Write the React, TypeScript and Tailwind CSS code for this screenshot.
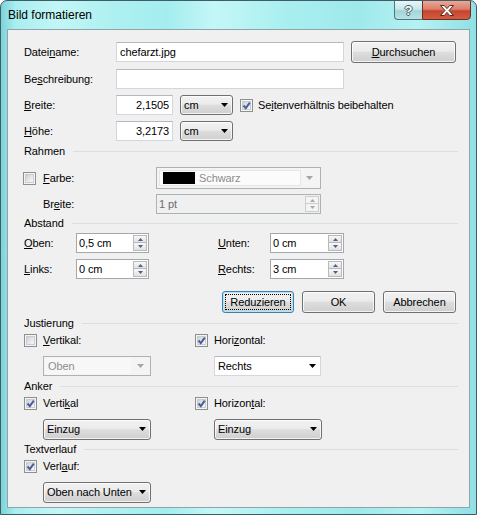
import React from "react";

const FONT = "font-['Liberation_Sans',Arial,sans-serif]";

function Arrow({ color = "#000" }: { color?: string }) {
  return (
    <svg width="7" height="4" viewBox="0 0 7 4" className="shrink-0">
      <path d="M0 0H7L3.5 4Z" fill={color} />
    </svg>
  );
}

function Check({ checked, className = "" }: { checked?: boolean; className?: string }) {
  return (
    <span
      className={`relative flex h-[13px] w-[13px] shrink-0 items-center justify-center border border-[#8e8f8f] bg-[#f4f4f4] ${className}`}
    >
      <span className="h-[9px] w-[9px] border border-[#c9ccd1] bg-[linear-gradient(135deg,#cbcfd5_0%,#e4e6e9_50%,#f7f7f7_100%)]" />
      {checked && (
        <svg width="11" height="11" viewBox="0 0 11 11" className="absolute left-[0px] top-[0px]">
          <polyline points="2.5,5.5 4.8,8.2 8.8,2.6" fill="none" stroke="#4a5f97" strokeWidth="2" />
        </svg>
      )}
    </span>
  );
}

function TextBox({ children, className = "" }: { children?: React.ReactNode; className?: string }) {
  return (
    <div
      className={`flex h-[20px] items-center border border-[#d3d6dc] border-t-[#b5b8bf] bg-white px-[3px] ${className}`}
    >
      {children}
    </div>
  );
}

function SpinBtns({ disabled }: { disabled?: boolean }) {
  const c = disabled ? "#a8a8a8" : "#4d6185";
  const box = disabled
    ? "border-[#cdcdcd] bg-[#f4f4f4]"
    : "border-[#b9b9b9] bg-[linear-gradient(#f8f8f8,#e2e2e2)]";
  return (
    <div className="mr-[1px] flex h-[16px] w-[14px] flex-col">
      <div className={`flex h-[8px] items-center justify-center border ${box}`}>
        <svg width="5" height="3" viewBox="0 0 5 3">
          <path d="M0 3L2.5 0L5 3Z" fill={c} />
        </svg>
      </div>
      <div className={`flex h-[8px] items-center justify-center border border-t-0 ${box}`}>
        <svg width="5" height="3" viewBox="0 0 5 3">
          <path d="M0 0H5L2.5 3Z" fill={c} />
        </svg>
      </div>
    </div>
  );
}

function Spin({ value, className = "", disabled }: { value: string; className?: string; disabled?: boolean }) {
  return (
    <div
      className={`flex h-[20px] items-center justify-between border ${
        disabled ? "border-[#adb2b5] bg-[#f0f0f0] text-[#6d6d6d]" : "border-[#a4a7ad] bg-white"
      } pl-[2px] ${className}`}
    >
      <span>{value}</span>
      <SpinBtns disabled={disabled} />
    </div>
  );
}

function DropBtn({ children, className = "" }: { children: React.ReactNode; className?: string }) {
  return (
    <div
      className={`flex items-center justify-between rounded-[3px] border border-[#707070] bg-[linear-gradient(#f2f2f2_0%,#ebebeb_45%,#dddddd_52%,#cfcfcf_100%)] pl-[3px] pr-[4px] shadow-[inset_0_0_0_1px_rgba(255,255,255,0.75)] ${className}`}
    >
      <span>{children}</span>
      <Arrow />
    </div>
  );
}

function Btn({ children, className = "", focused }: { children: React.ReactNode; className?: string; focused?: boolean }) {
  return (
    <div
      className={`relative flex items-center justify-center rounded-[3px] border bg-[linear-gradient(#f2f2f2_0%,#ebebeb_45%,#dddddd_52%,#cfcfcf_100%)] ${
        focused
          ? "border-[#3c7fb1] shadow-[inset_0_0_0_1px_#b7e3f9]"
          : "border-[#707070] shadow-[inset_0_0_0_1px_rgba(255,255,255,0.75)]"
      } ${className}`}
    >
      {focused && <span className="absolute inset-[2px] border border-dotted border-black" />}
      <span className="relative">{children}</span>
    </div>
  );
}

function Section({ title, className = "" }: { title: string; className?: string }) {
  return (
    <div className={`flex h-[14px] items-center ${className}`}>
      <span>{title}</span>
      <div className="ml-[8px] h-px flex-1 bg-[#d5dfe5]" />
    </div>
  );
}

export default function App() {
  return (
    <div
      className={`${FONT} h-[515px] w-[477px] overflow-hidden rounded-t-[7px] border border-[#3e5d66] bg-[linear-gradient(90deg,#7dd3d8_0%,#a9eef0_3%,#c3f6f6_12%,#b0f1f2_22%,#a4edef_35%,#c4f7f7_45%,#a9eff0_60%,#9fe9eb_75%,#b5f2f3_88%,#8fe0e4_100%)] text-[11px] leading-none tracking-[-0.1px] text-black`}
    >
      {/* Title bar */}
      <div className="flex h-[28px] items-start justify-between">
        <span className="ml-[7px] mt-[7px] text-[12px] leading-[14px] tracking-normal">Bild formatieren</span>
        <div className="mr-[5px] flex -mt-[1px]">
          <div className="flex h-[20px] w-[28px] items-center justify-center rounded-bl-[4px] border border-r-0 border-[#52747b] bg-[linear-gradient(#e6f7f8_0%,#c6e8ea_45%,#a2d4d7_55%,#b8e3e5_100%)]">
            <span className="text-[13px] font-bold text-white [text-shadow:1px_0_0_#3f5f66,-1px_0_0_#3f5f66,0_1px_0_#3f5f66,0_-1px_0_#3f5f66]">
              ?
            </span>
          </div>
          <div className="flex h-[20px] w-[49px] items-center justify-center rounded-br-[4px] border border-[#6a2e24] bg-[linear-gradient(#eaa898_0%,#dc7f6a_45%,#c5452e_55%,#d35b41_100%)]">
            <svg width="14" height="11" viewBox="0 0 14 11">
              <polygon
                points="0.5,0.5 4.3,0.5 7,3.6 9.7,0.5 13.5,0.5 9,5.5 13.5,10.5 9.7,10.5 7,7.4 4.3,10.5 0.5,10.5 5,5.5"
                fill="#fff"
                stroke="#5a2a22"
                strokeWidth="1"
              />
            </svg>
          </div>
        </div>
      </div>

      {/* Client area */}
      <div className="ml-[6px] h-[479px] w-[463px] border border-[#8fa3a9] bg-[#f0f0f0] pl-[16px] pr-[11px] pt-[11px]">
        <div className="flex h-[22px] items-center">
          <span className="w-[92px]">
            Datei<u>n</u>ame:
          </span>
          <TextBox className="w-[228px]">chefarzt.jpg</TextBox>
          <Btn className="ml-[7px] h-[22px] w-[105px]">
            <u>D</u>urchsuchen
          </Btn>
        </div>

        <div className="mt-[5px] flex h-[22px] items-center">
          <span className="w-[92px]">
            Be<u>s</u>chreibung:
          </span>
          <TextBox className="w-[228px]" />
        </div>

        <div className="mt-[4px] flex h-[22px] items-center">
          <span className="w-[92px]">
            <u>B</u>reite:
          </span>
          <TextBox className="w-[57px] justify-end">2,1505</TextBox>
          <DropBtn className="ml-[7px] h-[20px] w-[53px]">cm</DropBtn>
          <Check checked className="ml-[7px]" />
          <span className="ml-[5px]">
            Se<u>i</u>tenverhältnis beibehalten
          </span>
        </div>

        <div className="mt-[4px] flex h-[22px] items-center">
          <span className="w-[92px]">
            <u>H</u>öhe:
          </span>
          <TextBox className="w-[57px] justify-end">3,2173</TextBox>
          <DropBtn className="ml-[7px] h-[20px] w-[53px]">cm</DropBtn>
        </div>

        <Section title="Rahmen" className="mt-[2px]" />

        <div className="mt-[9px] flex h-[22px] items-center">
          <div className="-ml-[1px] flex w-[133px] items-center">
            <Check />
            <span className="ml-[7px]">
              <u>F</u>arbe:
            </span>
          </div>
          <div className="flex h-[22px] w-[165px] items-center border border-[#adb2b5] bg-[#f4f4f4] p-[2px]">
            <div className="flex h-full flex-1 items-center border border-[#e6e6e6] bg-[#fbfbfb] pl-[3px]">
              <span className="h-[12px] w-[32px] bg-black" />
              <span className="ml-[4px] text-[#8d8d8d]">Schwarz</span>
            </div>
            <div className="flex w-[17px] items-center justify-center">
              <Arrow color="#a6a6a6" />
            </div>
          </div>
        </div>

        <div className="mt-[4px] flex h-[22px] items-center">
          <span className="w-[132px] pl-[19px]">
            Br<u>e</u>ite:
          </span>
          <Spin value="1 pt" disabled className="w-[165px]" />
        </div>

        <Section title="Abstand" className="mt-[1px]" />

        <div className="mt-[2px] flex h-[22px] items-center">
          <span className="w-[52px]">
            <u>O</u>ben:
          </span>
          <Spin value="0,5 cm" className="w-[73px]" />
          <span className="ml-[69px] w-[52px]">
            <u>U</u>nten:
          </span>
          <Spin value="0 cm" className="w-[74px]" />
        </div>

        <div className="mt-[4px] flex h-[22px] items-center">
          <span className="w-[52px]">
            <u>L</u>inks:
          </span>
          <Spin value="0 cm" className="w-[73px]" />
          <span className="ml-[69px] w-[52px]">
            <u>R</u>echts:
          </span>
          <Spin value="3 cm" className="w-[74px]" />
        </div>

        <div className="mt-[11px] flex h-[22px] items-center">
          <Btn focused className="ml-[198px] h-[22px] w-[72px]">
            Reduzieren
          </Btn>
          <Btn className="ml-[8px] h-[22px] w-[73px]">OK</Btn>
          <Btn className="ml-[8px] h-[22px] w-[73px]">Abbrechen</Btn>
        </div>

        <Section title="Justierung" className="mt-[3px]" />

        <div className="flex h-[20px] items-center">
          <div className="flex w-[171px] items-center">
            <Check />
            <span className="ml-[6px]">
              <u>V</u>ertikal:
            </span>
          </div>
          <Check checked />
          <span className="ml-[6px]">
            Hori<u>z</u>ontal:
          </span>
        </div>

        <div className="mt-[5px] flex h-[22px] items-center pl-[19px]">
          <div className="flex h-[20px] w-[108px] items-center border border-[#adb2b5] bg-[#f4f4f4] p-[1px]">
            <div className="flex h-full flex-1 items-center bg-[#f7f7f7] pl-[3px] text-[#8d8d8d]">Oben</div>
            <div className="flex w-[18px] items-center justify-center">
              <Arrow color="#a6a6a6" />
            </div>
          </div>
          <div className="ml-[63px] flex h-[20px] w-[107px] items-center justify-between border border-[#d3d6dc] border-t-[#b5b8bf] bg-white pl-[3px] pr-[4px]">
            <span>Rechts</span>
            <Arrow />
          </div>
        </div>

        <Section title="Anker" className="mt-[2px]" />

        <div className="flex h-[20px] items-center">
          <div className="flex w-[171px] items-center">
            <Check checked />
            <span className="ml-[6px]">
              Verti<u>k</u>al
            </span>
          </div>
          <Check checked />
          <span className="ml-[6px]">
            Horizon<u>t</u>al:
          </span>
        </div>

        <div className="mt-[5px] flex h-[22px] items-center pl-[19px]">
          <DropBtn className="h-[21px] w-[108px]">Einzug</DropBtn>
          <DropBtn className="ml-[63px] h-[21px] w-[108px]">Einzug</DropBtn>
        </div>

        <Section title="Textverlauf" className="mt-[2px]" />

        <div className="flex h-[20px] items-center">
          <Check checked />
          <span className="ml-[6px]">
            Verl<u>a</u>uf:
          </span>
        </div>

        <div className="mt-[5px] flex h-[22px] items-center pl-[19px]">
          <DropBtn className="h-[21px] w-[108px]">Oben nach Unten</DropBtn>
        </div>
      </div>
    </div>
  );
}
